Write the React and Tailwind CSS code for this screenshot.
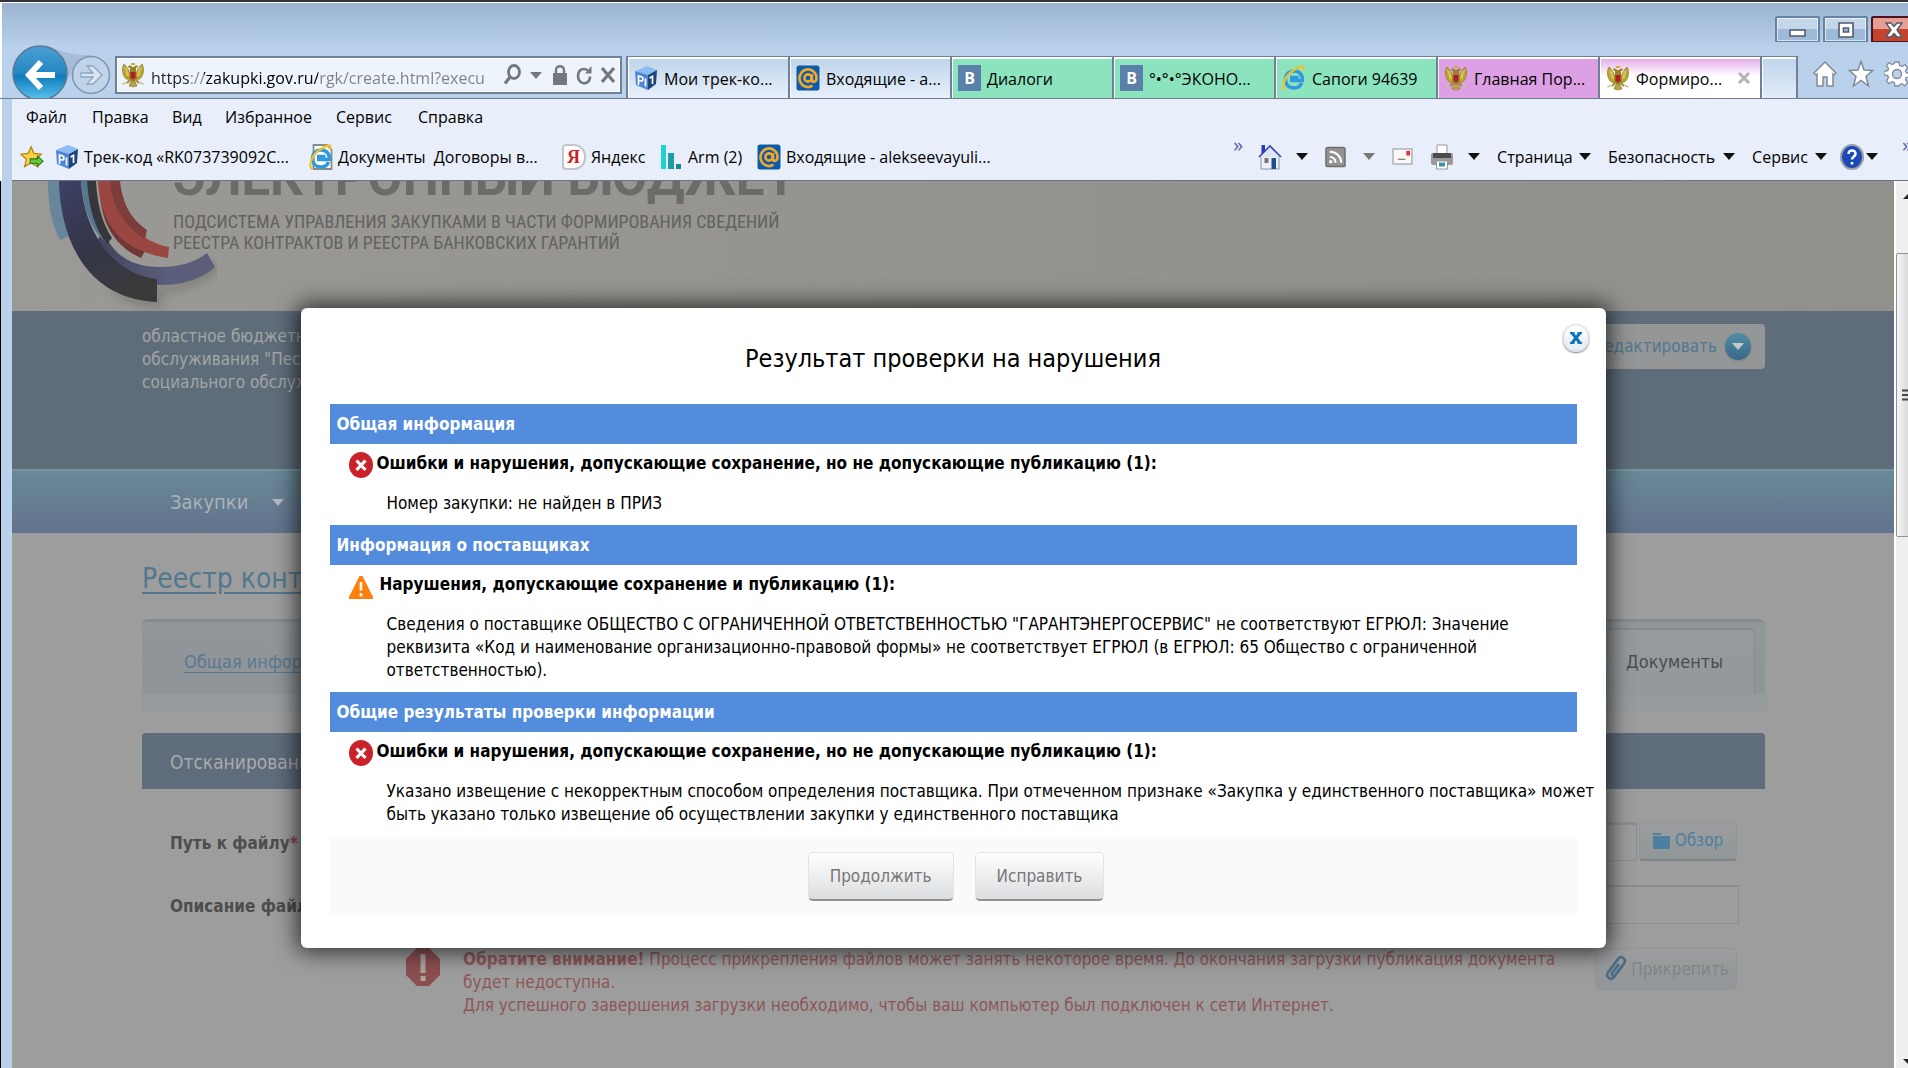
import React from "react";

const UI = "font-['Open_Sans','Noto_Sans',sans-serif]";
const TAHOMA = "font-['DejaVu_Sans_Condensed','DejaVu_Sans',sans-serif]";

/* ---------- icons ---------- */

function Eagle() {
  return (
    <svg viewBox="0 0 24 26" className="h-[26px] w-6 shrink-0" aria-hidden="true">
      <path d="M9 12C8 8 6 5 3 2 1 5 1 11 3 14c1 3 4 4 7 3z" fill="#b9a52c" stroke="#8d7a22" strokeWidth=".7" />
      <path d="M15 12c1-4 3-7 6-10 2 3 2 9 0 12-1 3-4 4-7 3z" fill="#b9a52c" stroke="#8d7a22" strokeWidth=".7" />
      <path d="M3.500 5l3 9M5.500 6l2 8M20.500 5l-3 9M18.500 6l-2 8" stroke="#e6d67c" strokeWidth=".8" fill="none" />
      <path d="M10 1h4v2h-4z" fill="#c9a93a" />
      <path d="M7 5c0-2 3-2 4 0h2c1-2 4-2 4 0l-2 1v5l1 6-4 4-4-4 1-6V6z" fill="#9b8228" />
      <path d="M9.500 10h5v5c0 1.500-2.500 2.500-2.500 2.500S9.500 16.500 9.500 15z" fill="#b01f26" />
      <path d="M9 18l-3 3M15 18l3 3" stroke="#a08a35" strokeWidth="1.800" fill="none" />
      <path d="M10 19h4l2 5-4 1-4-1z" fill="#b6a052" stroke="#8d7a22" strokeWidth=".6" />
      <path d="M1.500 22l4-1.500M22.500 22l-4-1.500" stroke="#cbbf86" strokeWidth="1.500" />
    </svg>
  );
}

function Cube() {
  return (
    <svg viewBox="0 0 24 26" className="h-[26px] w-6 shrink-0" aria-hidden="true">
      <path d="M1 6L13 1l10 4-9 5z" fill="#8dbcf2" />
      <path d="M1 6l13 4v15L2 20z" fill="#4f86d2" />
      <path d="M23 5l-9 5v15l8-6z" fill="#1f447c" />
      <path d="M4.500 20v-9l3 .800c2 .800 2 4.200-.500 4.200l-2.500-.500" stroke="#fff" strokeWidth="1.700" fill="none" />
      <path d="M11.500 13.500v8M15.500 13l3-1.500v7.500" stroke="#fff" strokeWidth="1.700" fill="none" />
    </svg>
  );
}

function AtMail() {
  return (
    <svg viewBox="0 0 24 26" className="h-[26px] w-6 shrink-0" aria-hidden="true">
      <rect x=".5" y=".5" width="23" height="25" rx="2.500" fill="#0a5ca8" />
      <circle cx="12" cy="13" r="3.600" fill="none" stroke="#f2a52b" strokeWidth="2.600" />
      <path d="M16 9v6c0 3 4.500 2.500 4.500-2a8.500 8.800 0 1 0-4 7.700" fill="none" stroke="#f2a52b" strokeWidth="2.600" />
    </svg>
  );
}

function VkMark() {
  return (
    <span className="flex h-[26px] w-[23px] shrink-0 items-center justify-center bg-[#5b80a9] text-base font-bold text-white">B</span>
  );
}

function IeMark({ page = false }) {
  return (
    <svg viewBox="0 0 24 26" className="h-[26px] w-6 shrink-0" aria-hidden="true">
      {page && <path d="M4.500 1H18l4.500 4.500V25h-18z" fill="#fff" stroke="#8b8b8b" strokeWidth="1.800" />}
      <path d="M19.500 18c-1 3-3.800 5-7.500 5-5 0-8.500-3.500-8.500-8.500S7 6 12 6s9 3.500 8.300 9.500H8M8 12.500h8.500" fill="none" stroke="#2f9bdc" strokeWidth="3.600" />
      <path d="M3 25C-1 22 3 10 12 5c5-3.500 9.500-5 9.500-2 0 1-.5 2-1 3" fill="none" stroke="#f2c12e" strokeWidth="2.200" />
    </svg>
  );
}

function Yandex() {
  return (
    <span className="flex h-[26px] w-6 shrink-0 items-center rounded-l-sm rounded-r-xl border-2 border-[#c3c5cc] bg-white pl-[3px] font-['Liberation_Serif',serif] text-lg font-bold text-[#cf1f25]">
      Я
    </span>
  );
}

function Bars() {
  return (
    <svg viewBox="0 0 24 26" className="h-[26px] w-6 shrink-0" aria-hidden="true">
      <path d="M2 1h5v24H2z" fill="#22cfd4" />
      <path d="M9 9h6v16H9z" fill="#1d9ca4" />
      <path d="M17 20h5v5h-5z" fill="#17868e" />
    </svg>
  );
}

function AddFavorite() {
  return (
    <svg viewBox="0 0 26 26" className="h-[26px] w-6 shrink-0" aria-hidden="true">
      <path d="M12 2l3 7 8 1-6 5.500 2 8-7-4-7 4 2-8L1 10l8-1z" fill="#fbd24a" stroke="#b9820f" strokeWidth="1.400" />
      <path d="M11 15h8v-3l6 5.500-6 5.500v-3h-8z" fill="#63c63e" stroke="#2c7d1b" strokeWidth="1.200" />
    </svg>
  );
}

function Caret({ color = "#111" }) {
  return (
    <svg viewBox="0 0 12 7" className="h-[7px] w-3 shrink-0" aria-hidden="true">
      <path d="M0 0h12L6 7z" fill={color} />
    </svg>
  );
}

function ErrorMark() {
  return (
    <svg viewBox="0 0 24 26" className="mt-0.5 h-[26px] w-6 shrink-0" aria-hidden="true">
      <ellipse cx="12" cy="13" rx="12" ry="13" fill="#cb2229" />
      <path d="M7.500 8.500l9 9.500M16.500 8.500l-9 9.500" stroke="#fff" strokeWidth="3.200" />
    </svg>
  );
}

function WarnMark() {
  return (
    <svg viewBox="0 0 24 26" className="mt-1 mr-[3px] h-[26px] w-6 shrink-0" aria-hidden="true">
      <path d="M10.500 2h3L24 23v2H0v-2z" fill="#ff7f0c" />
      <path d="M12 8v8.500M12 19v3.500" stroke="#fff" strokeWidth="2.600" />
    </svg>
  );
}

/* ---------- browser frame ---------- */

const tabs = [
  { icon: <Cube />, label: "Мои трек-ко...", tone: "bg-linear-to-b from-[#bed3ea] to-[#e9f1fb]" },
  { icon: <AtMail />, label: "Входящие - а...", tone: "bg-linear-to-b from-[#bed3ea] to-[#e9f1fb]" },
  { icon: <VkMark />, label: "Диалоги", tone: "bg-[#8ce4bf]" },
  { icon: <VkMark />, label: "°•°•°ЭКОНО...", tone: "bg-[#8ce4bf]" },
  { icon: <IeMark />, label: "Сапоги 94639", tone: "bg-[#8ce4bf]" },
  { icon: <Eagle />, label: "Главная Пор...", tone: "bg-[#dda0e4]" },
  { icon: <Eagle />, label: "Формиро...", tone: "bg-linear-to-b from-[#e0a4e8] to-white to-45%", active: true },
];

function CaptionButtons() {
  const base = "flex h-[27px] w-[45px] items-center justify-center rounded-xs border-2 border-[#6683a6] bg-linear-to-b from-[#c3d6ea] from-50% to-[#9dbad8] to-50% shadow-[inset_0_0_0_1px_rgba(255,255,255,0.6)]";
  return (
    <div className="-mr-2 flex justify-end gap-[3px] pt-[13px]">
      <button type="button" aria-label="Свернуть" className={base}>
        <svg viewBox="0 0 18 14" className="h-[14px] w-[18px]"><rect x="1" y="7" width="15" height="6" fill="#fff" stroke="#525a68" strokeWidth="1.500" /></svg>
      </button>
      <button type="button" aria-label="Развернуть" className={base}>
        <svg viewBox="0 0 18 16" className="h-4 w-[18px]"><path d="M2 1h14v14H2z M6.500 6v4h5V6z" fill="#fff" fillRule="evenodd" stroke="#525a68" strokeWidth="1.600" /></svg>
      </button>
      <button type="button" aria-label="Закрыть окно" className="flex h-[27px] w-[45px] items-center justify-center rounded-xs border-2 border-[#4b1420] bg-linear-to-b from-[#e5a093] from-50% to-[#c2442f] to-50%">
        <svg viewBox="0 0 18 16" className="h-4 w-[18px]"><path d="M1 1h5l3 3.500L12 1h5l-5 7 5 7h-5l-3-3.500L6 15H1l5-7z" fill="#fff" stroke="#525a68" strokeWidth="1.400" /></svg>
      </button>
    </div>
  );
}

function AddressBar() {
  return (
    <div className="mr-1 flex h-[38px] w-[507px] shrink-0 items-center border-2 border-[#6f8198] bg-[#eef4fc] pl-1 shadow-[inset_0_0_0_1px_#fff]">
      <Eagle />
      <input
        aria-label="Адрес"
        defaultValue="https://zakupki.gov.ru/rgk/create.html?execu"
        className="ml-1.5 w-[343px] bg-[linear-gradient(90deg,#222_39px,#888_39px,#888_53px,#000_53px,#000_167px,#808080_167px)] bg-clip-text pt-1.5 text-base text-transparent outline-none"
      />
      <div className="ml-2 flex items-center gap-2">
        <button type="button" aria-label="Поиск">
          <svg viewBox="0 0 20 24" className="h-6 w-5" fill="none" stroke="#75777b"><ellipse cx="12" cy="9" rx="5.500" ry="6.500" strokeWidth="2.800" /><path d="M8 14l-5 6.500" strokeWidth="3.200" /></svg>
        </button>
        <button type="button" aria-label="Список адресов"><Caret color="#75777b" /></button>
        <button type="button" aria-label="Безопасность сайта" className="ml-0.5">
          <svg viewBox="0 0 16 22" className="h-[22px] w-4"><path d="M1 9h14v12H1z" fill="#75777b" /><path d="M4 10V6c0-5 8-5 8 0v4" fill="none" stroke="#75777b" strokeWidth="2.400" /></svg>
        </button>
        <button type="button" aria-label="Обновить">
          <svg viewBox="0 0 16 22" className="h-[22px] w-4"><path d="M12 6.500C7 3 2 6 2 12s5 8.500 9 6.500c2-1 3-3 3-6" fill="none" stroke="#75777b" strokeWidth="2.600" /><path d="M9 9.500h6.500V2z" fill="#75777b" /></svg>
        </button>
        <button type="button" aria-label="Остановить">
          <svg viewBox="0 0 16 18" className="h-[18px] w-4"><path d="M2 2l12 14M14 2L2 16" stroke="#75777b" strokeWidth="3.200" /></svg>
        </button>
      </div>
    </div>
  );
}

function NavRow() {
  return (
    <div className="flex h-[57px] overflow-hidden border-b border-[#6f7d93]">
      <div className="mt-[2px] w-[115px] shrink-0">
        <svg viewBox="0 0 115 55" className="h-[55px] w-[115px]" role="img" aria-label="Назад и вперёд">
          <defs>
            <linearGradient id="back" x1="0" y1="0" x2="0" y2="1">
              <stop offset="0" stopColor="#4a9fd3" />
              <stop offset=".5" stopColor="#2487c2" />
              <stop offset=".55" stopColor="#0e7abc" />
              <stop offset="1" stopColor="#5cc4ec" />
            </linearGradient>
          </defs>
          <path d="M45 1c12 4 24 11 46 10L62 40z" fill="#a5bdd8" />
          <circle cx="91" cy="31" r="18.500" fill="#bfd3ea" stroke="#7f94ad" strokeWidth="1.500" />
          <path d="M81 29h12l-6-7h6l9 9-9 9h-6l6-7H81z" fill="#dbe6f3" stroke="#8fa4bd" strokeWidth="1.300" />
          <circle cx="40" cy="29" r="27" fill="url(#back)" stroke="#5d7896" strokeWidth="1.500" />
          <path d="M55 31H30M41 18L29 31l12 13" fill="none" stroke="#fff" strokeWidth="6" />
        </svg>
      </div>
      <div className="flex min-w-0 flex-1 pt-[14px]">
        <AddressBar />
        <div role="tablist" className="flex shrink-0 border-l-2 border-[#6f8198]">
          {tabs.map((t) => (
            <button
              key={t.label}
              type="button"
              role="tab"
              aria-selected={!!t.active}
              className={`flex h-[43px] w-[162px] shrink-0 items-center gap-1.5 overflow-hidden border-t border-r-2 border-[#6f8198] pl-1.5 text-left text-base whitespace-nowrap text-black shadow-[inset_0_2px_0_#fff,inset_1px_0_0_#fff] ${t.tone}`}
            >
              {t.icon}
              <span className="flex-1 pt-0.5">{t.label}</span>
              {t.active && (
                <svg viewBox="0 0 12 12" className="mr-2.5 h-3 w-3"><path d="M1 1l10 10M11 1L1 11" stroke="#b3b3b3" strokeWidth="3" /></svg>
              )}
            </button>
          ))}
          <button type="button" aria-label="Новая вкладка" className="h-[43px] w-9 shrink-0 border-t border-r-2 border-[#6f8198] bg-linear-to-b from-[#bed3ea] to-[#e3edf9] shadow-[inset_0_2px_0_#fff,inset_1px_0_0_#fff]" />
        </div>
        <div className="-mr-1.5 ml-auto flex shrink-0 items-start gap-2.5 pt-1 pr-1">
          <button type="button" aria-label="Домашняя страница">
            <svg viewBox="0 0 26 28" className="h-7 w-[26px]"><path d="M13 2l11 11-2 2-1-1v12h-6v-9h-4v9H5V14l-1 1-2-2z" fill="#fff" stroke="#808b99" strokeWidth="1.500" /></svg>
          </button>
          <button type="button" aria-label="Избранное">
            <svg viewBox="0 0 26 28" className="h-7 w-[26px]"><path d="M13 1.500l3 8.500 8.500.5-6.500 6 2.500 9.500L13 20.500 5.500 26 8 16.500l-6.500-6L10 10z" fill="#fff" stroke="#808b99" strokeWidth="1.500" /></svg>
          </button>
          <button type="button" aria-label="Настройки">
            <svg viewBox="0 0 26 28" className="h-7 w-[26px]">
              <path d="M11 2h4l.7 3.500 2.300 1 3-2 2.500 3-2 3 .8 2.200 3.700.6v3.500l-3.700.7-.8 2.200 2 3-2.500 3-3-2-2.300 1L15 26h-4l-.7-3.300-2.300-1-3 2-2.500-3 2-3-.8-2.200L0 14.800v-3.500l3.700-.6.8-2.200-2-3 2.500-3 3 2 2.300-1z" fill="#fff" stroke="#808b99" strokeWidth="1.300" />
              <circle cx="13" cy="14" r="4.500" fill="#b9d1ea" stroke="#808b99" strokeWidth="1.300" />
            </svg>
          </button>
        </div>
      </div>
    </div>
  );
}

const menu = [
  ["Файл", "w-[66px]"],
  ["Правка", "w-[80px]"],
  ["Вид", "w-[53px]"],
  ["Избранное", "w-[111px]"],
  ["Сервис", "w-[82px]"],
  ["Справка", "w-[80px]"],
];

const favorites = [
  { icon: <Cube />, label: "Трек-код «RK073739092C...", w: "w-[254px]" },
  { icon: <IeMark page />, label: "Документы  Договоры в...", w: "w-[253px]" },
  { icon: <Yandex />, label: "Яндекс", w: "w-[97px]" },
  { icon: <Bars />, label: "Arm (2)", w: "w-[98px]" },
  { icon: <AtMail />, label: "Входящие - alekseevayuli...", w: "w-[250px]" },
];

function ToolIcon({ label, children, caret, gap }) {
  return (
    <button type="button" aria-label={label} className={`flex items-center ${gap}`}>
      {children}
      {caret && <Caret color={caret} />}
    </button>
  );
}

function Toolbars() {
  return (
    <div className="ml-3 flex h-[82px] flex-col border-b border-[#6d7380] bg-[#e8effa] text-base text-black">
      <nav className="flex h-9 items-center pl-[14px]">
        {menu.map(([m, w]) => (
          <button key={m} type="button" className={`${w} text-left whitespace-nowrap`}>{m}</button>
        ))}
      </nav>
      <div className="flex h-[43px] items-center overflow-hidden">
        <button type="button" aria-label="Добавить на панель избранного" className="mr-[11px] ml-2"><AddFavorite /></button>
        {favorites.map((f) => (
          <button key={f.label} type="button" className={`${f.w} flex shrink-0 items-center gap-[5px] text-left`}>
            {f.icon}
            <span className="whitespace-pre">{f.label}</span>
          </button>
        ))}
        <div className="-mr-1 ml-auto flex h-full shrink-0 items-center">
          <button type="button" aria-label="Ещё ссылки" className="mt-0.5 mr-[15px] self-start text-xl leading-4 text-[#5a5fa8]">»</button>
          <div className="flex items-center gap-[17px]">
            <ToolIcon label="Домой" caret="#111" gap="gap-3.5">
              <svg viewBox="0 0 24 26" className="h-[26px] w-6">
                <path d="M3 12h18v13H3z" fill="#eef0f5" stroke="#8c93a5" />
                <path d="M1 13L12 2l11 11" fill="#dfe5f3" stroke="#3b49b5" strokeWidth="1.600" />
                <path d="M3.500 1H7v6l-3.500 3z" fill="#2937c4" />
                <path d="M6.500 14h4v5h-4z" fill="#777" /><path d="M13.500 14h4.500v11h-4.500z" fill="#1f4c92" />
              </svg>
            </ToolIcon>
            <ToolIcon label="Каналы" caret="#777" gap="gap-[17px]">
              <svg viewBox="0 0 22 22" className="h-[22px] w-[21px]">
                <rect x="1" y="1" width="20" height="20" rx="2" fill="#929292" stroke="#6d6d6d" strokeWidth="1.500" />
                <path d="M5 11c4 0 6 3 6 6M5 5.500c7 0 12 5 12 11.500" fill="none" stroke="#fff" strokeWidth="2.200" /><circle cx="6" cy="16" r="1.800" fill="#fff" />
              </svg>
            </ToolIcon>
            <ToolIcon label="Почта" gap="">
              <svg viewBox="0 0 22 18" className="h-[17px] w-[21px]">
                <rect x="1" y="1" width="20" height="16" fill="#f8f8f6" stroke="#a9a9ae" strokeWidth="1.400" />
                <path d="M15 3h4v5h-4z" fill="#df3340" /><path d="M6 12h8" stroke="#888" strokeWidth="1.400" />
              </svg>
            </ToolIcon>
            <ToolIcon label="Печать" caret="#111" gap="gap-3.5">
              <svg viewBox="0 0 24 26" className="h-[26px] w-6">
                <path d="M7 1h10v9H7z" fill="#fff" stroke="#999" /><rect x="1" y="9" width="22" height="12" rx="2" fill="#9a9a9a" />
                <path d="M3 9h18v5H3z" fill="#4c4c4c" /><path d="M6.500 17h11v8h-11z" fill="#fff" stroke="#999" /><path d="M9 18.500h6v4H9z" fill="#3a95a3" />
              </svg>
            </ToolIcon>
            <button type="button" className="flex w-[94px] items-center justify-between whitespace-nowrap">Страница<Caret /></button>
            <button type="button" className="flex w-[127px] items-center justify-between whitespace-nowrap">Безопасность<Caret /></button>
            <button type="button" className="flex w-[75px] items-center justify-between whitespace-nowrap">Сервис<Caret /></button>
            <ToolIcon label="Справка" caret="#111" gap="-ml-1 gap-0.5">
              <svg viewBox="0 0 24 26" className="h-[26px] w-6">
                <ellipse cx="12" cy="13" rx="11" ry="12" fill="#1d49b5" stroke="#9aa0ab" strokeWidth="2" />
                <path d="M8.500 10c0-5 7.500-4.500 7 0-.3 2.500-3.500 2.500-3.500 5.500M12 18v2.500" fill="none" stroke="#fff" strokeWidth="2.500" />
              </svg>
            </ToolIcon>
          </div>
          <button type="button" aria-label="Ещё команды" className="mt-0.5 ml-6 self-start text-xl leading-4 text-[#5a5fa8]">»</button>
        </div>
      </div>
    </div>
  );
}

/* ---------- page beneath the dialog ---------- */

function Emblem() {
  return (
    <svg viewBox="0 0 205 130" className="h-[130px] w-[205px] shrink-0" aria-hidden="true">
      <defs>
        <linearGradient id="ring" x1="0" y1="0" x2=".6" y2="1">
          <stop offset="0" stopColor="#3e4067" />
          <stop offset=".5" stopColor="#34364a" />
          <stop offset="1" stopColor="#3a3a3b" />
        </linearGradient>
        <linearGradient id="arc" x1="0" y1="0" x2="1" y2="0">
          <stop offset="0" stopColor="#41445c" />
          <stop offset=".6" stopColor="#5b5e7c" />
          <stop offset="1" stopColor="#5d5f79" />
        </linearGradient>
        <filter id="soft" x="-20%" y="-20%" width="140%" height="140%"><feGaussianBlur stdDeviation="5" /></filter>
      </defs>
      <path d="M95 108c16 14 34 20 55 20l2-16c24-2 42-10 58-24l-10-8c-30 26-70 30-105 28z" fill="#7a7975" opacity=".7" filter="url(#soft)" />
      <path d="M36 0c0 22 3 42 12 59l9-4C51 40 48 20 48 0z" fill="#67869a" />
      <path d="M92 50c8 24 28 36 56 36 20 0 36-5 47-14l8 14c-14 13-35 19-59 18-24-1-46-18-58-46z" fill="url(#arc)" />
      <path d="M47 0c1 56 26 118 98 121V98C104 94 72 54 69 0z" fill="url(#ring)" />
      <path d="M69 0c2 28 10 48 24 61l5-6C86 40 82 20 82 0z" fill="#55788f" />
      <path d="M75 0c2 28 8 48 20 63l5-6C90 42 85 22 84 0z" fill="#36373d" />
      <path d="M88 14c2 30 16 52 41 63l4-7C108 58 98 38 94 14z" fill="#6f3836" />
      <path d="M86 0c2 44 24 70 70 77l1-11C124 60 108 34 107 0z" fill="#9a4743" />
      <path d="M98 0c2 26 14 46 35 58l2-9C118 38 110 20 108 0z" fill="#7e3c3a" />
    </svg>
  );
}

function SiteHeader() {
  return (
    <>
      <header className="flex h-[130px] overflow-hidden bg-linear-to-r from-[#9b9996] via-[#94938e] to-[#91908b] font-['Roboto_Condensed','Roboto',sans-serif]">
        <Emblem />
        <div className="-ml-[44px] whitespace-nowrap">
          <div className="-mt-8 font-['Roboto',sans-serif] text-[51px] leading-[58px] font-bold text-[#6b6b69]">ЭЛЕКТРОННЫЙ БЮДЖЕТ</div>
          <div className="mt-1 text-lg leading-[21px] text-[#62625f]">
            ПОДСИСТЕМА УПРАВЛЕНИЯ ЗАКУПКАМИ В ЧАСТИ ФОРМИРОВАНИЯ СВЕДЕНИЙ
            <br />
            РЕЕСТРА КОНТРАКТОВ И РЕЕСТРА БАНКОВСКИХ ГАРАНТИЙ
          </div>
        </div>
      </header>
      <div className="flex h-[158px] justify-between bg-[#5f6d7b] pt-[13px] pr-[129px] pl-[130px] text-[17px] leading-[23px] text-[#a3a5a6]">
        <p className="pt-px whitespace-nowrap">
          областное бюджетное учреждение
          <br />
          обслуживания "Пестречинский
          <br />
          социального обслуживания"
        </p>
        <button type="button" className="flex h-[45px] items-center gap-2 rounded-sm bg-[#949698] px-3.5 text-[#52788f]">
          Редактировать
          <span className="flex h-[27px] w-[26px] items-center justify-center rounded-full bg-linear-to-b from-[#528fa3] to-[#3a6787] shadow-sm">
            <Caret color="#c2c8cb" />
          </span>
        </button>
      </div>
      <nav className="flex h-16 items-center border-t-2 border-[#7694a0] bg-linear-to-b from-[#698898] to-[#62738c] px-[158px] text-xl text-[#aab2b7]">
        <button type="button" className="flex items-center gap-6">
          Закупки
          <Caret color="#b4bbbf" />
        </button>
      </nav>
    </>
  );
}

function SiteBody() {
  const btn = "flex items-center justify-center gap-1 rounded-sm border border-[#929698] bg-linear-to-b from-[#9c9d9e] to-[#919698]";
  return (
    <main className="pt-7 pr-[129px] pl-[130px]">
      <a href="#registry" className="text-[28px] leading-9 text-[#52788f] underline underline-offset-4">Реестр контрактов</a>
      <div className="mt-[22px] rounded-t-md border-t-3 border-[#858c91] bg-linear-to-b from-[#90969a] to-[#8e9497]">
        <div className="flex justify-between pt-[6px] pr-[10px] pl-[42px]">
          <a href="#general" className="pt-[22px] text-lg leading-6 text-[#5b788f] underline underline-offset-4">Общая информация</a>
          <a href="#docs" className="h-[66px] rounded-tr-md border-t-2 border-r border-[#858c91] bg-linear-to-b from-[#979a9c] to-[#93999c] pt-[20px] pr-[31px] pl-8 text-lg leading-6 text-[#4c4c4e]">Документы</a>
        </div>
      </div>
      <div className="-mr-0.5 h-[17px] border-b border-[#95989a] bg-[#969b9e]" />
      <h2 className="mt-[22px] flex h-14 items-center rounded-t-sm bg-[#5f6c7b] px-7 pt-0.5 text-[19px] text-[#a9abad]">Отсканированные документы</h2>
      <div className="mt-[33px] flex h-[39px] items-center pr-7 pl-7">
        <label htmlFor="path" className="w-[235px] pt-1 text-[17px] font-bold text-[#4d4d4d]">
          Путь к файлу<span className="text-[#8a4848]">*</span>
        </label>
        <input id="path" className="h-[39px] min-w-0 flex-1 border border-t-3 border-[#8d9093] bg-transparent px-2 outline-none" />
        <button type="button" className={`ml-0.5 h-[39px] w-[98px] border-b-2 border-b-[#808487] text-[17px] text-[#4e7f9f] ${btn}`}>
          <svg viewBox="0 0 18 18" className="h-[18px] w-[18px]"><path d="M0 4V1h8v2h9v14H0z" fill="#4d7f9f" /><path d="M0 3.500h17" stroke="#9a9d9f" /></svg>
          Обзор
        </button>
      </div>
      <div className="mt-6 flex h-[39px] items-center pr-[26px] pl-7">
        <label htmlFor="about" className="w-[235px] pt-1 text-[17px] font-bold text-[#4d4d4d]">Описание файла</label>
        <input id="about" className="h-[39px] min-w-0 flex-1 border border-t-2 border-[#8a8d90] bg-transparent px-2 outline-none" />
      </div>
      <div className="mt-6 flex items-start pr-7 pl-[264px] text-[17px] leading-[23px] text-[#8d5759]">
        <svg viewBox="0 0 34 38" className="h-[38px] w-[34px] shrink-0" aria-hidden="true">
          <path d="M11 0h12l11 11v16L23 38H11L0 27V11z" fill="#8c4f50" />
          <path d="M17 6v19M17 28v5" stroke="#a9a3a3" strokeWidth="5" />
        </svg>
        <p className="ml-[23px] flex-1 whitespace-nowrap">
          <b>Обратите внимание!</b> Процесс прикрепления файлов может занять некоторое время. До окончания загрузки публикация документа
          <br />
          будет недоступна.
          <br />
          Для успешного завершения загрузки необходимо, чтобы ваш компьютер был подключен к сети Интернет.
        </p>
        <button type="button" className={`h-[42px] w-[142px] text-[17px] text-[#7f8487] ${btn}`}>
          <svg viewBox="0 0 24 28" className="h-7 w-6" fill="none" stroke="#4b6c86" strokeWidth="2.600"><path d="M20 10l-9 12c-3 4-9 0-6-4.500L15 4c3-4 9 0 6 4.500L12 20c-2 2-4 0-3-2l7-9" /></svg>
          Прикрепить
        </button>
      </div>
    </main>
  );
}

/* ---------- dialog ---------- */

const sections = [
  {
    title: "Общая информация",
    kind: "error",
    head: "Ошибки и нарушения, допускающие сохранение, но не допускающие публикацию (1):",
    lines: ["Номер закупки: не найден в ПРИЗ"],
  },
  {
    title: "Информация о поставщиках",
    kind: "warn",
    head: "Нарушения, допускающие сохранение и публикацию (1):",
    lines: [
      'Сведения о поставщике ОБЩЕСТВО С ОГРАНИЧЕННОЙ ОТВЕТСТВЕННОСТЬЮ "ГАРАНТЭНЕРГОСЕРВИС" не соответствуют ЕГРЮЛ: Значение',
      "реквизита «Код и наименование организационно-правовой формы» не соответствует ЕГРЮЛ (в ЕГРЮЛ: 65 Общество с ограниченной",
      "ответственностью).",
    ],
  },
  {
    title: "Общие результаты проверки информации",
    kind: "error",
    head: "Ошибки и нарушения, допускающие сохранение, но не допускающие публикацию (1):",
    lines: [
      "Указано извещение с некорректным способом определения поставщика. При отмеченном признаке «Закупка у единственного поставщика» может",
      "быть указано только извещение об осуществлении закупки у единственного поставщика",
    ],
  },
];

function Dialog() {
  const btn = "flex h-[49px] items-center justify-center rounded-[5px] border border-b-2 border-[#e2e4e6] border-b-[#929292] bg-linear-to-b from-white to-[#dcdddf] px-[21px] pt-0.5 text-[17px] text-[#777]";
  return (
    <section role="dialog" aria-labelledby="dlg-title" className="relative w-[1305px] max-w-full self-start rounded-md bg-white px-[29px] pb-8 text-black shadow-[0_0_22px_4px_rgba(0,0,0,0.7)]">
      <button type="button" aria-label="Закрыть" className="absolute top-4 right-[17px] flex h-7 w-[26px] items-center justify-center rounded-full border border-[#d5dbe1] bg-linear-to-b from-white to-[#e3eaf1] shadow-[0_1px_2px_rgba(0,0,0,0.5)]">
        <svg viewBox="0 0 12 12" className="h-3 w-3"><path d="M2 1l8 10M10 1L2 11" stroke="#0f75bd" strokeWidth="3" /><path d="M0 1h4.500M7.500 1H12M0 11h4.500M7.500 11H12" stroke="#0f75bd" strokeWidth="2" /></svg>
      </button>
      <h1 id="dlg-title" className="flex h-24 items-center justify-center pt-1.5 text-[25px]">Результат проверки на нарушения</h1>
      {sections.map((s) => (
        <div key={s.title}>
          <h2 className="flex h-10 items-center bg-[#538bdd] pt-0.5 pl-[7px] text-[17px] font-bold text-white">{s.title}</h2>
          <h3 className="flex h-10 items-center gap-1 pl-[19px] text-[17px] font-bold whitespace-nowrap">
            {s.kind === "error" ? <ErrorMark /> : <WarnMark />}
            {s.head}
          </h3>
          <p className="pt-2 pb-2.5 pl-[57px] text-[17px] leading-[23px] whitespace-nowrap">
            {s.lines.map((l) => (
              <span key={l} className="block">{l}</span>
            ))}
          </p>
        </div>
      ))}
      <div className="flex justify-center gap-[21px] bg-[#fafafa] pt-4 pb-[15px] pl-1.5">
        <button type="button" className={btn}>Продолжить</button>
        <button type="button" className={btn}>Исправить</button>
      </div>
    </section>
  );
}

function Scrollbar() {
  return (
    <div className="flex w-[14px] shrink-0 flex-col overflow-hidden border-l-2 border-white bg-[#efefef]" aria-hidden="true">
      <svg viewBox="0 0 12 72" className="h-[72px] w-3 shrink-0"><path d="M7 18l5-5v5z" fill="#222" /></svg>
      <div className="-mr-1 flex h-[284px] shrink-0 items-center rounded-xs border border-[#939393] bg-linear-to-r from-[#f6f6f6] to-[#d3d3d3] pl-[5px]">
        <svg viewBox="0 0 10 14" className="h-[14px] w-2.5"><path d="M0 2h10M0 7h10M0 12h10" stroke="#444" strokeWidth="2" /></svg>
      </div>
      <div className="flex-1" />
      <svg viewBox="0 0 12 12" className="h-3 w-3 shrink-0"><path d="M7 3h5v5z" fill="#222" /></svg>
    </div>
  );
}

export default function App() {
  return (
    <div className={`flex h-screen flex-col overflow-hidden border-t-2 border-[#33323a] bg-[#b9d1ea] ${UI}`}>
      <div className="border-t border-l-2 border-white bg-linear-to-b from-[#9ab3d0] to-[#b9d1ea] to-25%">
        <div className="-ml-0.5">
          <div className="h-[39px] overflow-hidden"><CaptionButtons /></div>
          <NavRow />
          <Toolbars />
        </div>
      </div>
      <div className="flex min-h-0 flex-1 border-l border-black">
        <div className={`relative ml-[11px] min-w-0 flex-1 overflow-hidden bg-[#9d9d9d] ${TAHOMA}`}>
          <SiteHeader />
          <SiteBody />
          <div className="absolute inset-0 flex justify-center pt-[127px]">
            <Dialog />
          </div>
        </div>
        <Scrollbar />
      </div>
    </div>
  );
}
